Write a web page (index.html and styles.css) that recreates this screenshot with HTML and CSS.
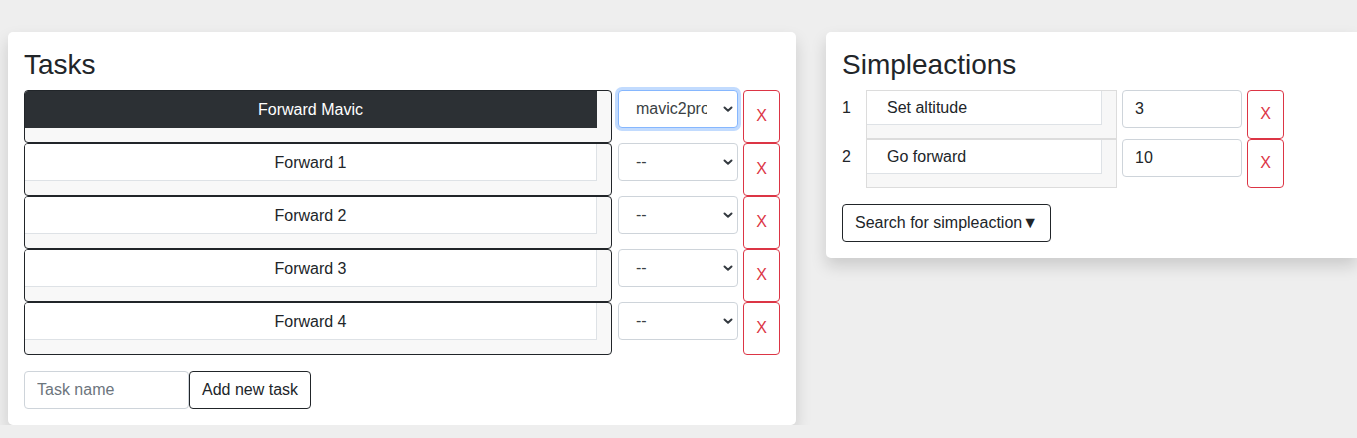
FILE: index.html
```html
<!DOCTYPE html>
<html lang="en">
<head>
<meta charset="utf-8">
<title>Tasks</title>
<link rel="stylesheet" href="styles.css">
</head>
<body>
<div class="page">
  <section class="card card-tasks">
    <h3 class="card-title">Tasks</h3>
    <div class="task-list">
      <div class="task-row">
        <div class="task active"><div class="task-name">Forward Mavic</div></div>
        <select class="select focused"><option>mavic2pro</option></select>
        <button class="btn-x task-x">X</button>
      </div>
      <div class="task-row">
        <div class="task"><div class="task-name">Forward 1</div></div>
        <select class="select"><option>--</option></select>
        <button class="btn-x task-x">X</button>
      </div>
      <div class="task-row">
        <div class="task"><div class="task-name">Forward 2</div></div>
        <select class="select"><option>--</option></select>
        <button class="btn-x task-x">X</button>
      </div>
      <div class="task-row">
        <div class="task"><div class="task-name">Forward 3</div></div>
        <select class="select"><option>--</option></select>
        <button class="btn-x task-x">X</button>
      </div>
      <div class="task-row">
        <div class="task"><div class="task-name">Forward 4</div></div>
        <select class="select"><option>--</option></select>
        <button class="btn-x task-x">X</button>
      </div>
    </div>
    <div class="add-task">
      <input class="input task-input" type="text" placeholder="Task name">
      <button class="btn-outline">Add new task</button>
    </div>
  </section>

  <section class="card card-actions">
    <h3 class="card-title">Simpleactions</h3>
    <div class="action-list">
      <div class="action-row">
        <div class="num">1</div>
        <div class="action"><div class="action-name">Set altitude</div></div>
        <input class="input value-input" type="text" value="3">
        <button class="btn-x action-x">X</button>
      </div>
      <div class="action-row">
        <div class="num">2</div>
        <div class="action"><div class="action-name">Go forward</div></div>
        <input class="input value-input" type="text" value="10">
        <button class="btn-x action-x">X</button>
      </div>
    </div>
    <button class="btn-outline search-btn">Search for simpleaction▼</button>
  </section>
</div>
</body>
</html>
```

FILE: styles.css
```css
* {
  box-sizing: border-box;
}

html, body {
  margin: 0;
  overflow: hidden;
}

body {
  background: #eeeeee;
  font-family: "Liberation Sans", Arial, sans-serif;
  font-size: 16px;
  color: #212529;
}

.page {
  display: flex;
  align-items: flex-start;
  gap: 30px;
  padding: 32px 0 0 8px;
}

.card {
  background: #fff;
  border-radius: 5px;
  box-shadow: 0 8px 16px rgba(0, 0, 0, 0.15);
  padding: 16px;
}

.card-tasks {
  flex: 0 0 788px;
}

.card-actions {
  flex: 1 1 auto;
  min-width: 0;
  border-top-right-radius: 0;
  border-bottom-right-radius: 0;
}

.card-title {
  margin: 0 0 8px;
  font-size: 28px;
  font-weight: 500;
  line-height: 1.2;
  color: #212529;
}

/* Tasks */
.task-row {
  display: flex;
  align-items: flex-start;
}

.task {
  width: 588px;
  height: 53px;
  border: 1px solid #212529;
  border-radius: 4px;
  background: #f8f8f8;
  padding: 0 14px 14px 0;
  overflow: hidden;
}

.task-name {
  height: 37px;
  line-height: 37px;
  text-align: center;
  background: #fff;
  border-right: 1px solid #dee2e6;
  border-bottom: 1px solid #dee2e6;
  color: #212529;
}

.task.active .task-name {
  background: #2c3034;
  color: #fff;
  border-color: #2c3034;
}

.select {
  -webkit-appearance: none;
  appearance: none;
  margin-left: 6px;
  width: 120px;
  height: 38px;
  border: 1px solid #ced4da;
  border-radius: 4px;
  padding: 0 30px 0 17px;
  font-family: inherit;
  font-size: 16px;
  color: #3a3f44;
  background-color: #fff;
  background-image: url("data:image/svg+xml,%3csvg xmlns='http://www.w3.org/2000/svg' viewBox='0 0 12 12'%3e%3cpath fill='none' stroke='%23343a40' stroke-width='2' stroke-linecap='round' stroke-linejoin='round' d='M2.5 4.5l3.5 3.2 3.5-3.2'/%3e%3c/svg%3e");
  background-repeat: no-repeat;
  background-position: right 3px center;
  background-size: 12px 12px;
  outline: none;
}

.select.focused {
  border-color: #86b7fe;
  box-shadow: 0 0 0 3px rgba(13, 110, 253, 0.25);
}

.btn-x {
  margin-left: 5px;
  width: 37px;
  padding: 0;
  border: 1px solid #dc3545;
  border-radius: 4px;
  background: #fff;
  color: #dc3545;
  font-family: inherit;
  font-size: 16px;
}

.task-x {
  height: 53px;
}

.add-task {
  display: flex;
  margin-top: 16px;
}

.input {
  height: 38px;
  border: 1px solid #ced4da;
  border-radius: 4px;
  padding: 0 12px;
  font-family: inherit;
  font-size: 16px;
  color: #212529;
  background: #fff;
  outline: none;
}

.input::placeholder {
  color: #6c757d;
}

.task-input {
  width: 165px;
}

.btn-outline {
  height: 38px;
  padding: 0 12px;
  border: 1px solid #212529;
  border-radius: 4px;
  background: #fff;
  color: #212529;
  font-family: inherit;
  font-size: 16px;
}

/* Simpleactions */
.action-row {
  display: flex;
  align-items: flex-start;
}

.num {
  width: 24px;
  margin-top: 1px;
  line-height: 34px;
}

.action {
  width: 251px;
  height: 49px;
  border: 1px solid #dcdcdc;
  background: #f7f7f7;
  padding: 0 14px 13px 0;
}

.action-name {
  height: 34px;
  line-height: 33px;
  padding-left: 20px;
  background: #fff;
  border-right: 1px solid #dee2e6;
  border-bottom: 1px solid #dee2e6;
}

.value-input {
  margin-left: 5px;
  width: 120px;
}

.action-x {
  height: 49px;
}

.search-btn {
  margin-top: 16px;
}
```
